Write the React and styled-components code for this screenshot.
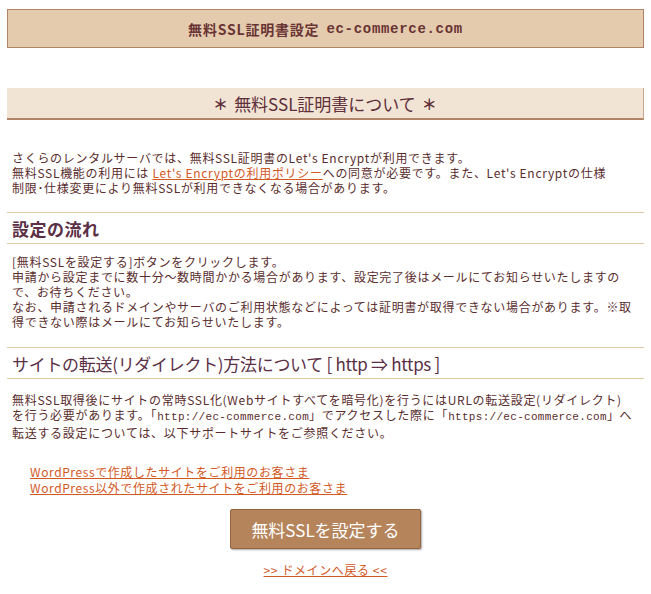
import React from 'react'
import styled, { createGlobalStyle } from 'styled-components';

const Global = createGlobalStyle`
    body{
        margin: 0;
        background: #ffffff;
        font-family: "Noto Sans CJK JP", "DejaVu Sans", sans-serif;
        color: #5a2d2d;
    }
`

const Page = styled.div`
    padding: 9px 7px 0 7px;
    width: 637px;
`

const TitleBar = styled.div`
    height: 37px;
    border: 1px solid #b08566;
    background-color: #e4cbae;
    display: flex;
    align-items: center;
    justify-content: center;
    font-size: 14px;
    font-weight: bold;
    letter-spacing: 0.8px;
    color: #6a3434;
    .domain{
        font-family: "Liberation Mono", monospace;
        margin-left: 7px;
        letter-spacing: 0.7px;
    }
`

const Heading = styled.h2`
    margin: 40px 0 0 0;
    height: 30px;
    background-color: #f2e4d4;
    border-bottom: 2px solid #b08466;
    border-right: 1px solid #c9a88c;
    display: flex;
    align-items: center;
    justify-content: center;
    font-size: 17px;
    font-weight: normal;
    color: #5e2f3a;
    .star{
        font-weight: bold;
        margin: 0 6px;
        font-size: 15px;
    }
`

const Text = styled.p`
    margin: ${props => props.top || '0'} 0 0 0;
    padding: 0 5px;
    font-size: 12px;
    line-height: 15px;
    white-space: nowrap;
    letter-spacing: 0.7px;
    .mono{
        font-family: "Liberation Mono", monospace;
        font-size: 11px;
        letter-spacing: 0.3px;
    }
`

const Section = styled.h3`
    margin: ${props => props.top} 0 0 0;
    height: 30px;
    border-top: 1px solid #dccba3;
    border-bottom: 1px solid #dccba3;
    display: flex;
    align-items: center;
    padding: 0 5px;
    font-size: 17px;
    font-weight: ${props => props.bold ? 'bold' : 'normal'};
    letter-spacing: ${props => props.bold ? '0.5px' : '-0.3px'};
    color: #5b2f45;
`

const Link = styled.a`
    color: #d2591f;
    text-decoration: underline;
`

const LinkList = styled.div`
    margin-top: 24px;
    padding-left: 23px;
    display: flex;
    flex-direction: column;
    font-size: 12px;
    line-height: 16px;
    letter-spacing: 0.6px;
`

const Center = styled.div`
    display: flex;
    flex-direction: column;
    align-items: center;
    margin-top: 13px;
`

const SetButton = styled.button`
    width: 191px;
    height: 40px;
    background-color: #b5845b;
    border: 1px solid #96653f;
    border-radius: 2px;
    box-shadow: 1px 1px 2px rgba(0,0,0,0.35);
    color: #ffffff;
    font-family: "Noto Sans CJK JP", sans-serif;
    font-size: 17px;
`

const BackLink = styled(Link)`
    margin-top: 13px;
    font-size: 12px;
    line-height: 16px;
    letter-spacing: 0.6px;
`

function App() {
    return (
        <Page>
            <Global />
            <TitleBar>無料SSL証明書設定<span className="domain">ec-commerce.com</span></TitleBar>

            <Heading><span className="star">＊</span>無料SSL証明書について<span className="star">＊</span></Heading>

            <Text top="30px">
                さくらのレンタルサーバでは、無料SSL証明書のLet's Encryptが利用できます。<br/>
                無料SSL機能の利用には <Link href="#">Let's Encryptの利用ポリシー</Link>への同意が必要です。また、Let's Encryptの仕様<br/>
                制限･仕様変更により無料SSLが利用できなくなる場合があります。
            </Text>

            <Section top="17px" bold>設定の流れ</Section>

            <Text top="10px">
                [無料SSLを設定する]ボタンをクリックします。<br/>
                申請から設定までに数十分～数時間かかる場合があります、設定完了後はメールにてお知らせいたしますの<br/>
                で、お待ちください。<br/>
                なお、申請されるドメインやサーバのご利用状態などによっては証明書が取得できない場合があります。※取<br/>
                得できない際はメールにてお知らせいたします。
            </Text>

            <Section top="18px">サイトの転送(リダイレクト)方法について [ http ⇒ https ]</Section>

            <Text top="13px">
                無料SSL取得後にサイトの常時SSL化(Webサイトすべてを暗号化)を行うにはURLの転送設定(リダイレクト)<br/>
                を行う必要があります。「<span className="mono">http://ec-commerce.com</span>」でアクセスした際に「<span className="mono">https://ec-commerce.com</span>」へ<br/>
                転送する設定については、以下サポートサイトをご参照ください。
            </Text>

            <LinkList>
                <div><Link href="#">WordPressで作成したサイトをご利用のお客さま</Link></div>
                <div><Link href="#">WordPress以外で作成されたサイトをご利用のお客さま</Link></div>
            </LinkList>

            <Center>
                <SetButton>無料SSLを設定する</SetButton>
                <BackLink href="#">&gt;&gt; ドメインへ戻る &lt;&lt;</BackLink>
            </Center>
        </Page>
    );
}

export default App;
